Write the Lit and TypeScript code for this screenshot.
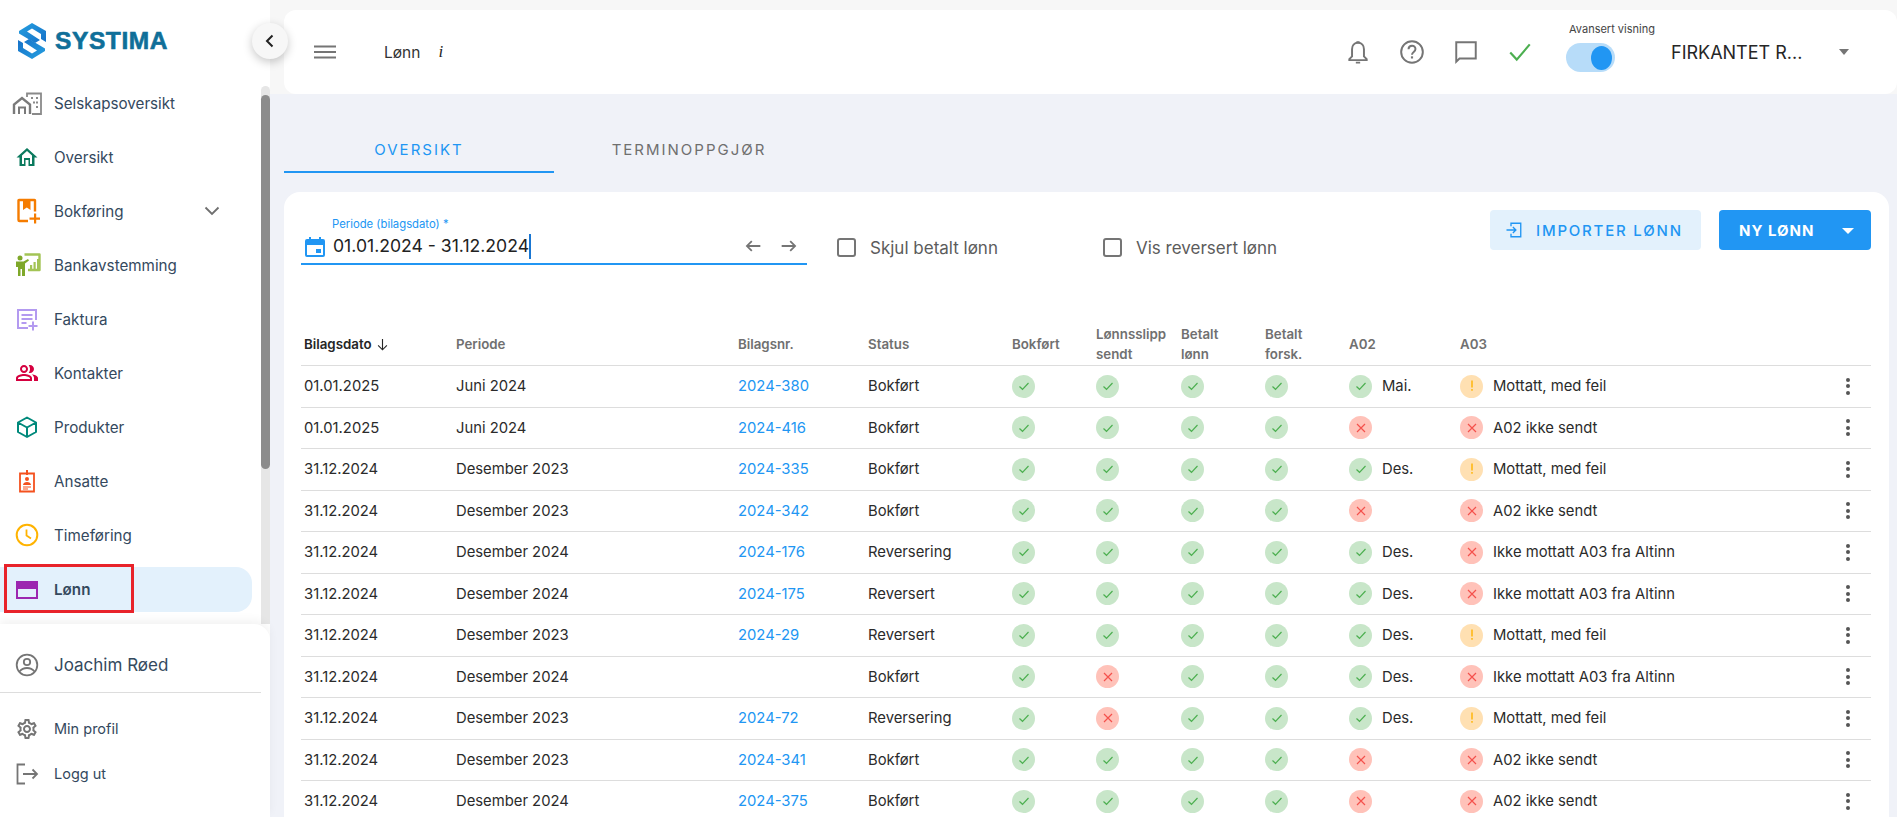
import { LitElement, html, css, svg } from "lit";
import { customElement } from "lit/decorators.js";

const FONT_PATHS = {
  people: "M16.67 13.13C18.04 14.06 19 15.32 19 17v3h4v-3c0-2.18-3.57-3.47-6.33-3.87zM15 12c2.21 0 4-1.79 4-4s-1.79-4-4-4c-.47 0-.91.1-1.33.24C14.5 5.27 15 6.58 15 8s-.5 2.73-1.33 3.76c.42.14.86.24 1.33.24zM9 12c2.21 0 4-1.79 4-4s-1.79-4-4-4-4 1.79-4 4 1.79 4 4 4zm0-6c1.1 0 2 .9 2 2s-.9 2-2 2-2-.9-2-2 .9-2 2-2zM9 13c-2.67 0-8 1.34-8 4v3h16v-3c0-2.66-5.33-4-8-4zm6 5H3v-.99C3.2 16.29 6.3 15 9 15s5.8 1.29 6 2v1z",
  gear: "M19.43 12.98c.04-.32.07-.64.07-.98 0-.34-.03-.66-.07-.98l2.11-1.65c.19-.15.24-.42.12-.64l-2-3.46c-.09-.16-.26-.25-.44-.25-.06 0-.12.01-.17.03l-2.49 1c-.52-.4-1.08-.73-1.69-.98l-.38-2.65C14.46 2.18 14.25 2 14 2h-4c-.25 0-.46.18-.49.42l-.38 2.65c-.61.25-1.17.59-1.69.98l-2.49-1c-.06-.02-.12-.03-.18-.03-.17 0-.34.09-.43.25l-2 3.46c-.13.22-.07.49.12.64l2.11 1.65c-.04.32-.07.65-.07.98 0 .33.03.66.07.98l-2.11 1.65c-.19.15-.24.42-.12.64l2 3.46c.09.16.26.25.44.25.06 0 .12-.01.17-.03l2.49-1c.52.4 1.08.73 1.69.98l.38 2.65c.03.24.24.42.49.42h4c.25 0 .46-.18.49-.42l.38-2.65c.61-.25 1.17-.59 1.69-.98l2.49 1c.06.02.12.03.18.03.17 0 .34-.09.43-.25l2-3.46c.12-.22.07-.49-.12-.64l-2.11-1.65zm-1.98-1.71c.04.31.05.52.05.73 0 .21-.02.43-.05.73l-.14 1.13.89.7 1.08.84-.7 1.21-1.27-.51-1.04-.42-.9.68c-.43.32-.84.56-1.25.73l-1.06.43-.16 1.13-.2 1.35h-1.4l-.19-1.35-.16-1.13-1.06-.43c-.43-.18-.83-.41-1.23-.71l-.91-.7-1.06.43-1.27.51-.7-1.21 1.08-.84.89-.7-.14-1.13c-.03-.31-.05-.54-.05-.74s.02-.43.05-.73l.14-1.13-.89-.7-1.08-.84.7-1.21 1.27.51 1.04.42.9-.68c.43-.32.84-.56 1.25-.73l1.06-.43.16-1.13.2-1.35h1.39l.19 1.35.16 1.13 1.06.43c.43.18.83.41 1.23.71l.91.7 1.06-.43 1.27-.51.7 1.21-1.07.85-.89.7.14 1.13zM12 8c-2.21 0-4 1.79-4 4s1.79 4 4 4 4-1.79 4-4-1.79-4-4-4zm0 6c-1.1 0-2-.9-2-2s.9-2 2-2 2 .9 2 2-.9 2-2 2z",
};

const ico = (body: unknown, size = 24, vb = "0 0 24 24") =>
  html`<svg class="ico" width=${size} height=${size} viewBox=${vb}>${body}</svg>`;

const navIcons: Record<string, unknown> = {
  company: svg`<path d="M-1 23V13.500L7 7l8 6.500V23" fill="none" stroke="#7a7a7a" stroke-width="2.400"/><path d="M4 23v-6.500h6V23" fill="none" stroke="#7a7a7a" stroke-width="2"/><path fill="none" stroke="#8a8a8a" stroke-width="1.800" d="M12 6V2.500h14V23H17"/><path fill="#8a8a8a" d="M16 6h2v2h-2zM21 6h2v2h-2zM21 10.500h2v2h-2zM21 15h2v2h-2zM18 10.500h2v2h-2z"/>`,
  home: svg`<path fill="#0b7a5e" d="M12 3 1.500 12.500h3V21h6v-6h3v6h6v-8.500h3zm0 3 5 4.500V19h-2v-6H9v6H7v-8.500z"/>`,
  book: svg`<path fill="none" stroke="#f57c00" stroke-width="2.400" stroke-linejoin="round" d="M20 12.500V1.500a.5.5 0 0 0-.5-.5H4a.5.5 0 0 0-.5.5V21a1 1 0 0 0 1 1H13"/><path fill="#f57c00" d="M8 1h7.500v10l-3.700-2.500L8 11z"/><path fill="#f57c00" d="M19 14.500h2.200v4H25v2.200h-3.800v3.800H19v-3.800h-4.500v-2.200H19z"/>`,
  bank: svg`<circle cx="5" cy="5" r="2.500" fill="#7fa82a"/><path fill="#7fa82a" d="M1 8.500h7.500l4.500-2.500 1 1.600-4 3V23H7v-7H5.500v7H3v-9H1z"/><path fill="none" stroke="#a3c455" stroke-width="2.400" stroke-linejoin="round" d="M9.500 1.500H24.500V17H13"/><path fill="#a3c455" d="M15 12h2.200v4H15zM18.500 9h2.200v7h-2.200zM22 6h2v10h-2z"/>`,
  invoice: svg`<path fill="none" stroke="#b39af0" stroke-width="2" d="M13 21H3V3h18v10"/><path fill="#b39af0" d="M6.500 7h11v2h-11zM6.500 11h11v2h-11zM6.500 15h5v2h-5zM17 14.500h2v3.500h3.500v2H19v3.500h-2V20h-3.500v-2H17z"/>`,
  contacts: svg`<path fill="#d5003f" d=${FONT_PATHS.people}/>`,
  product: svg`<path fill="none" stroke="#00897b" stroke-width="2" stroke-linejoin="round" d="M12 2.500 21 7.500v9.500l-9 5-9-5V7.500zM3 7.500l9 5 9-5M12 12.500V22"/>`,
  employee: svg`<path fill="none" stroke="#f4511e" stroke-width="1.800" d="M5 4.500h14v18H5z"/><path fill="#f4511e" d="M11 1h2v5h-2z"/><circle cx="12" cy="10" r="2" fill="#f4511e"/><path fill="#f4511e" d="M8 16c0-2 2-3 4-3s4 1 4 3zM8 17.500h8v1H8zM8 19.500h5v1H8z"/>`,
  clock: svg`<circle cx="12" cy="12" r="10.300" fill="none" stroke="#ffb300" stroke-width="2"/><path fill="none" stroke="#ffb300" stroke-width="1.800" d="M11.500 6.500v6l4.500 3"/>`,
  card: svg`<path fill="#9c27b0" fill-rule="evenodd" d="M1 3h22v18H1zM3 11v8h18v-8z"/>`,
};

const nav = [
  ["Selskapsoversikt", "company"],
  ["Oversikt", "home"],
  ["Bokføring", "book"],
  ["Bankavstemming", "bank"],
  ["Faktura", "invoice"],
  ["Kontakter", "contacts"],
  ["Produkter", "product"],
  ["Ansatte", "employee"],
  ["Timeføring", "clock"],
  ["Lønn", "card"],
];

type St = "ok" | "x" | "w";
const M = "Mottatt, med feil", A = "A02 ikke sendt", I = "Ikke mottatt A03 fra Altinn";
const D3 = "Desember 2023", D4 = "Desember 2024";
const rows: [string, string, string, string, St[], St, string, St, string][] = [
  ["01.01.2025", "Juni 2024", "2024-380", "Bokført", ["ok", "ok", "ok", "ok"], "ok", "Mai.", "w", M],
  ["01.01.2025", "Juni 2024", "2024-416", "Bokført", ["ok", "ok", "ok", "ok"], "x", "", "x", A],
  ["31.12.2024", D3, "2024-335", "Bokført", ["ok", "ok", "ok", "ok"], "ok", "Des.", "w", M],
  ["31.12.2024", D3, "2024-342", "Bokført", ["ok", "ok", "ok", "ok"], "x", "", "x", A],
  ["31.12.2024", D4, "2024-176", "Reversering", ["ok", "ok", "ok", "ok"], "ok", "Des.", "x", I],
  ["31.12.2024", D4, "2024-175", "Reversert", ["ok", "ok", "ok", "ok"], "ok", "Des.", "x", I],
  ["31.12.2024", D3, "2024-29", "Reversert", ["ok", "ok", "ok", "ok"], "ok", "Des.", "w", M],
  ["31.12.2024", D4, "", "Bokført", ["ok", "x", "ok", "ok"], "ok", "Des.", "x", I],
  ["31.12.2024", D3, "2024-72", "Reversering", ["ok", "x", "ok", "ok"], "ok", "Des.", "w", M],
  ["31.12.2024", D3, "2024-341", "Bokført", ["ok", "ok", "ok", "ok"], "x", "", "x", A],
  ["31.12.2024", D4, "2024-375", "Bokført", ["ok", "ok", "ok", "ok"], "x", "", "x", A],
];

const status = (s: St) => html`<span class="dot ${s}">
  ${s === "ok"
    ? html`<svg width="12" height="12" viewBox="0 0 12 12"><path d="M1.500 6.500 4.500 9.300 10.500 3" fill="none" stroke="#4caf50" stroke-width="1.200"/></svg>`
    : s === "x"
    ? html`<svg width="12" height="12" viewBox="0 0 12 12"><path d="M2 2l8 8M10 2l-8 8" fill="none" stroke="#f4514c" stroke-width="1.200"/></svg>`
    : html`<svg width="12" height="12" viewBox="0 0 12 12"><path d="M6 0.500v7M6 9v1.800" fill="none" stroke="#ffb300" stroke-width="1.400"/></svg>`}
</span>`;

@customElement("app-root")
export class AppRoot extends LitElement {
  static styles = css`
    :host { display: block; height: 817px; overflow: hidden; font-family: Inter, "Liberation Sans", Arial, sans-serif; color: #262626; background: #f0f2f8; }
    * { box-sizing: border-box; }
    .ico { display: block; flex: none; overflow: visible; }
    .app { display: flex; height: 817px; position: relative; }
    .side { width: 270px; flex: none; background: #fff; display: flex; flex-direction: column; position: relative; }
    .logo { height: 76px; flex: none; display: flex; align-items: flex-start; gap: 9px; padding: 23px 0 0 18px; }
    .logo span { font: 700 24.500px/36px "Liberation Sans", sans-serif; color: #0f6f99; letter-spacing: .6px; -webkit-text-stroke: .6px #0f6f99; }
    .navwrap { flex: 1; min-height: 0; position: relative; }
    .track { position: absolute; left: 261px; top: 10px; bottom: 0; width: 9px; background: #e6e6e6; border-radius: 5px 5px 0 0; }
    .thumb { position: absolute; left: 0; top: 9px; height: 374px; width: 9px; background: #8c8c8c; border-radius: 5px; }
    .item { height: 54px; display: flex; align-items: center; padding-left: 15px; gap: 15px; font-size: 15.200px; color: #34495e; position: relative; width: 252px; }
    .item .chev { position: absolute; left: 200px; }
    .item.sel { height: 45px; margin-top: 5px; border-radius: 0 16px 16px 0; background: #e3f1fc; font-weight: 600; }
    .redbox { position: absolute; left: 4px; top: -3px; width: 130px; height: 49px; border: 3px solid #e8232a; }
    .bottom { height: 193px; flex: none; background: #fff; border-radius: 0 16px 0 0; box-shadow: 0 -4px 10px rgba(0,0,0,.05); position: relative; z-index: 1; display: flex; flex-direction: column; }
    .user { height: 69px; display: flex; align-items: center; padding: 14px 0 0 15px; gap: 15px; font-size: 17px; color: #34495e; border-bottom: 1px solid #ddd; width: 261px; }
    .link { display: flex; align-items: center; gap: 15px; padding-left: 15px; font-size: 14.500px; color: #34495e; height: 45px; }
    .links { padding-top: 13px; }
    .collapse { position: absolute; left: 252px; top: 23px; width: 36px; height: 36px; border-radius: 50%; background: #f7f7f7; box-shadow: 0 3px 10px rgba(0,0,0,.22); display: flex; align-items: center; justify-content: center; z-index: 3; }

    .main { flex: 1; min-width: 0; padding: 10px 0 0 14px; display: flex; flex-direction: column; background: linear-gradient(#f7f7f7 0 94px, #f0f2f8 94px); }
    .top { height: 84px; background: #fff; border-radius: 12px; display: flex; align-items: center; padding-left: 29px; flex: none; }
    .crumb { margin-left: 47px; font-size: 15.500px; color: #333; }
    .i { margin-left: 18px; font: italic 17px "Liberation Serif", serif; width: 20px; }
    .spacer { flex: 1; }
    .tools { display: flex; align-items: center; gap: 28px; }
    .adv { width: 105px; margin-left: 33px; position: relative; height: 52px; }
    .adv label { position: absolute; left: 3px; top: -4px; font-size: 11px; color: #444; white-space: nowrap; }
    .sw { position: absolute; left: 0; top: 17px; width: 49px; height: 29px; border-radius: 15px; background: #b7dcf9; }
    .sw i { position: absolute; right: 3px; top: 2.500px; width: 21px; height: 24px; border-radius: 50%; background: #2196f3; }
    .co { font-size: 18px; color: #262626; width: 168px; white-space: nowrap; }
    .caret { width: 0; height: 0; border: 5.500px solid transparent; border-top: 6px solid #757575; border-bottom: 0; margin-right: 48px; }

    .tabs { display: flex; height: 79px; padding-top: 19px; flex: none; }
    .tab { width: 270px; height: 60px; padding-top: 27px; text-align: center; font-size: 15px; letter-spacing: 2px; color: #2196f3; border-bottom: 2px solid #2196f3; }
    .tab.off { color: #6f6f6f; border-bottom: 0; }
    .panel { flex: 1; margin: 19px 8px 0 0; background: #fff; border-radius: 16px 16px 0 0; padding: 18px 18px 0 17px; min-height: 0; overflow: hidden; }
    .filters { height: 113px; display: flex; align-items: flex-start; flex: none; }
    .date { width: 506px; height: 55px; border-bottom: 2px solid #2196f3; position: relative; display: flex; padding-top: 24px; flex: none; }
    .date .lbl { position: absolute; left: 31px; top: 7px; font-size: 11.300px; color: #2196f3; }
    .date .val { font-size: 17.600px; color: #222; margin-left: 6px; line-height: 24px; border-right: 2px solid #1976d2; height: 25px; }
    .date .cal { margin-left: 2px; }
    .arrows { margin-left: auto; display: flex; gap: 14px; padding-right: 7px; padding-top: 1px; }
    .check { display: flex; align-items: center; gap: 14px; font-size: 17px; color: #5c5c5c; height: 55px; padding-top: 20px; }
    .check b { display: block; width: 19px; height: 19px; border: 2px solid #757575; border-radius: 3px; }
    .c1 { margin-left: 30px; width: 266px; }
    .btn { height: 40px; border-radius: 4px; display: flex; align-items: center; font-size: 15px; font-weight: 500; letter-spacing: 1.800px; }
    .imp { margin-left: auto; width: 211px; background: #e3f1fc; color: #2196f3; padding-left: 15px; gap: 13px; }
    .new { margin-left: 18px; width: 152px; background: #2196f3; color: #fff; font-weight: 700; padding-left: 20px; letter-spacing: 1px; position: relative; }
    .new u { position: absolute; right: 17px; top: 18px; width: 0; height: 0; border: 6px solid transparent; border-top: 6px solid #fff; border-bottom: 0; }

    .row { display: grid; grid-template-columns: 152px 282px 130px 144px 84px 85px 84px 84px 111px 1fr 28px; align-items: center; }
    .thead { height: 43px; border-bottom: 1px solid #ddd; font-size: 13.300px; font-weight: 600; color: #707070; line-height: 20px; }
    .thead div { padding-left: 3px; }
    .thead .act { color: #262626; display: flex; align-items: center; gap: 3px; }
    .body { height: 41.500px; border-bottom: 1px solid #ddd; font-size: 14.800px; color: #2b2b2b; }
    .body > div { padding-left: 3px; white-space: nowrap; display: flex; align-items: center; gap: 10px; }
    .body a { color: #2196f3; text-decoration: none; }
    .dot { width: 23px; height: 23px; border-radius: 50%; display: flex; align-items: center; justify-content: center; flex: none; }
    .dot.ok { background: #c8e6c9; }
    .dot.x { background: #ffc2b9; }
    .dot.w { background: #ffe0b2; }
    .kebab { display: flex; flex-direction: column; gap: 2.500px; align-items: center; width: 4px; }
    .kebab i { width: 4px; height: 4px; border-radius: 50%; background: #555; }
  `;

  render() {
    return html`<div class="app">
      <aside class="side">
        <div class="logo">
          <svg width="28" height="36" viewBox="0 0 28 36" class="ico">
            <defs><linearGradient id="lg" x1="0" y1="0" x2="1" y2="1"><stop offset="0" stop-color="#25a0e0"/><stop offset="1" stop-color="#1670c8"/></linearGradient></defs>
            <path fill="url(#lg)" d="M1 8 14 0l14 8v11l-5-3v-5L14 5.500 9 8.500 22 17l-5 3L1 10.500z"/>
            <path fill="url(#lg)" transform="rotate(180 14 18)" d="M1 8 14 0l14 8v11l-5-3v-5L14 5.500 9 8.500 22 17l-5 3L1 10.500z"/>
          </svg>
          <span>SYSTIMA</span>
        </div>
        <div class="navwrap">
          <div class="track"><div class="thumb"></div></div>
          ${nav.map(([t, k], i) => html`<div class="item ${i === 9 ? "sel" : ""}">
            ${ico(navIcons[k])}<span>${t}</span>
            ${i === 2 ? html`<svg class="chev" width="24" height="24" viewBox="0 0 24 24"><path d="M5.500 8.500 12 15l6.500-6.500" fill="none" stroke="#6f6f6f" stroke-width="1.800"/></svg>` : ""}
            ${i === 9 ? html`<div class="redbox"></div>` : ""}
          </div>`)}
        </div>
        <div class="bottom">
          <div class="user">
            ${ico(svg`<circle cx="12" cy="12" r="10.300" fill="none" stroke="#757575" stroke-width="1.800"/><circle cx="12" cy="9" r="3.200" fill="none" stroke="#757575" stroke-width="1.800"/><path d="M4.500 18.500c2-2.500 5-3.500 7.500-3.500s5.500 1 7.500 3.500" fill="none" stroke="#757575" stroke-width="1.800"/>`)}
            <span>Joachim Røed</span>
          </div>
          <div class="links">
            <div class="link">${ico(svg`<path fill="#757575" d=${FONT_PATHS.gear}/>`)}<span>Min profil</span></div>
            <div class="link">${ico(svg`<path d="M10 2.500H2.500v19H10" fill="none" stroke="#757575" stroke-width="1.800"/><path d="M8 12h14M17.500 7.500 22 12l-4.500 4.500" fill="none" stroke="#757575" stroke-width="1.800"/>`)}<span>Logg ut</span></div>
          </div>
        </div>
      </aside>
      <div class="collapse"><svg width="14" height="14" viewBox="0 0 14 14"><path d="M9.500 1.500 4 7l5.500 5.500" fill="none" stroke="#222" stroke-width="2"/></svg></div>
      <main class="main">
        <header class="top">
          <svg class="ico" width="24" height="24" viewBox="0 0 24 24"><path d="M1 5.500h22v2H1zM1 11h22v2H1zM1 16.500h22v2H1z" fill="#757575"/></svg>
          <span class="crumb">Lønn</span><span class="i">i</span>
          <div class="spacer"></div>
          <div class="tools">
            ${ico(svg`<path d="M12 3.500c-3.500 0-5.500 2.700-5.500 6v6.500L4 18.500v1h16v-1L17.500 16V9.500c0-3.300-2-6-5.500-6z" fill="none" stroke="#757575" stroke-width="1.800"/><path d="M10.500 2h3v2h-3zM10 21h4v1.500h-4z" fill="#757575"/>`, 26)}
            ${ico(svg`<circle cx="12" cy="12" r="10" fill="none" stroke="#757575" stroke-width="1.800"/><path d="M8.800 9.500c0-4.300 6.400-4.300 6.400-.3 0 2.800-3.200 2.600-3.200 5.300" fill="none" stroke="#757575" stroke-width="1.800"/><path d="M11 16h2v2h-2z" fill="#757575"/>`, 26)}
            ${ico(svg`<path d="M3 3h18v15H6l-3 3z" fill="none" stroke="#757575" stroke-width="1.800"/>`, 26)}
            ${ico(svg`<path d="M3 12.500 9 19 21 5" fill="none" stroke="#4caf50" stroke-width="2"/>`, 26)}
          </div>
          <div class="adv"><label>Avansert visning</label><div class="sw"><i></i></div></div>
          <div class="co">FIRKANTET R...</div>
          <div class="caret"></div>
        </header>
        <div class="tabs"><div class="tab">OVERSIKT</div><div class="tab off">TERMINOPPGJØR</div></div>
        <section class="panel">
          <div class="filters">
            <div class="date">
              <span class="lbl">Periode (bilagsdato) *</span>
              <span class="cal">${ico(svg`<path fill="#2196f3" d="M4 5h2V3h2v2h8V3h2v2h2a2 2 0 0 1 2 2v14a2 2 0 0 1-2 2H4a2 2 0 0 1-2-2V7a2 2 0 0 1 2-2zm0 6v10h16V11zM13 15h5v4h-5z"/>`, 24)}</span>
              <span class="val">01.01.2024 - 31.12.2024</span>
              <div class="arrows">
                ${ico(svg`<path fill="#757575" d="M20 11H7.800l3.600-3.600L10 6l-6 6 6 6 1.400-1.400L7.800 13H20z"/>`, 22)}
                ${ico(svg`<path fill="#757575" d="M4 11h12.200l-3.600-3.600L14 6l6 6-6 6-1.400-1.400 3.600-3.600H4z"/>`, 22)}
              </div>
            </div>
            <div class="check c1"><b></b><span>Skjul betalt lønn</span></div>
            <div class="check"><b></b><span>Vis reversert lønn</span></div>
            <div class="btn imp">
              ${ico(svg`<path fill="none" stroke="#2196f3" stroke-width="1.800" d="M8 7V3h13v18H8v-4M2 12h12M10.500 8l4 4-4 4"/>`, 18)}
              <span>IMPORTER LØNN</span>
            </div>
            <div class="btn new">NY LØNN<u></u></div>
          </div>
          <div class="row thead">
            <div class="act">Bilagsdato ${ico(svg`<path d="M12 3v17M5 13.500 12 20.500l7-7" fill="none" stroke="#262626" stroke-width="1.800"/>`, 15)}</div>
            <div>Periode</div><div>Bilagsnr.</div><div>Status</div><div>Bokført</div>
            <div>Lønnsslipp<br />sendt</div><div>Betalt<br />lønn</div><div>Betalt<br />forsk.</div>
            <div>A02</div><div>A03</div><div></div>
          </div>
          ${rows.map((r) => html`<div class="row body">
            <div>${r[0]}</div><div>${r[1]}</div><div><a>${r[2]}</a></div><div>${r[3]}</div>
            ${r[4].map((s) => html`<div>${status(s)}</div>`)}
            <div>${status(r[5])}${r[6]}</div>
            <div>${status(r[7])}${r[8]}</div>
            <div><span class="kebab"><i></i><i></i><i></i></span></div>
          </div>`)}
        </section>
      </main>
    </div>`;
  }
}
